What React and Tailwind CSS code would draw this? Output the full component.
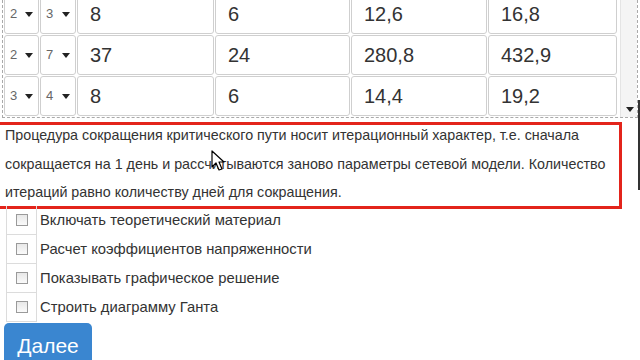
import React from "react";

const rows = [
  { a: "2", b: "3", vals: ["8", "6", "12,6", "16,8"] },
  { a: "2", b: "7", vals: ["37", "24", "280,8", "432,9"] },
  { a: "3", b: "4", vals: ["8", "6", "14,4", "19,2"] },
];

const options = [
  "Включать теоретический материал",
  "Расчет коэффициентов напряженности",
  "Показывать графическое решение",
  "Строить диаграмму Ганта",
];

const Caret = () => (
  <svg width="8" height="5" viewBox="0 0 8 5" className="shrink-0">
    <path d="M0 0 L8 0 L4 5 Z" fill="#222" />
  </svg>
);

const SelectCell = ({ value, w }) => (
  <div
    className={`flex h-full ${w} items-center justify-between rounded-[3px] border border-[#cfcfcf] bg-white pl-[5px] pr-[5px] text-[13px] text-[#666]`}
  >
    <span>{value}</span>
    <Caret />
  </div>
);

const NumCell = ({ value, w }) => (
  <div
    className={`flex h-full ${w} items-center rounded-[3px] border border-[#cfcfcf] bg-white pl-[12px] text-[20px] text-[#333]`}
  >
    {value}
  </div>
);

const Cursor = () => (
  <svg
    width="14"
    height="22"
    viewBox="0 0 14 22"
    className="pointer-events-none absolute left-[211px] top-[150px]"
  >
    <path
      d="M1 1 L1 17 L5 13 L8 20 L11 19 L8 12 L13 12 Z"
      fill="#fff"
      stroke="#000"
      strokeWidth="1.2"
      strokeLinejoin="round"
    />
  </svg>
);

export default function App() {
  return (
    <div
      className="relative h-[360px] w-[640px] overflow-hidden bg-white"
      style={{ fontFamily: '"Liberation Sans", Arial, sans-serif' }}
    >
      {/* table scroll view */}
      <div className="ml-[2px] mr-[2px] flex h-[118px] flex-col justify-end overflow-hidden border-b border-l border-r border-dashed border-[#aaa]">
        <div className="flex">
          <div className="flex flex-col gap-[1px] pb-[1px] pl-[1px]">
            {rows.map((r, i) => (
              <div key={i} className="flex h-[40px] gap-[1px]">
                <SelectCell value={r.a} w="w-[35px]" />
                <SelectCell value={r.b} w="w-[36px]" />
                <NumCell value={r.vals[0]} w="w-[137px]" />
                <NumCell value={r.vals[1]} w="w-[135px]" />
                <NumCell value={r.vals[2]} w="w-[136px]" />
                <NumCell value={r.vals[3]} w="w-[129px]" />
              </div>
            ))}
          </div>
          <div className="ml-[3px] flex w-[18px] flex-col justify-end border-l border-[#e4e4e4] bg-[#f4f4f4] pb-[5px] pl-[5px]">
            <Caret />
          </div>
        </div>
      </div>

      {/* highlighted note */}
      <div className="mt-[4px] ml-[-3px] h-[87px] w-[625px] overflow-hidden border-[3px] border-[#e3241b] pl-[5px]">
        <p className="-mt-[4px] text-[14.3px] leading-[28.5px] text-[#333]">
          Процедура сокращения критического пути носит итерационный характер,
          т.е. сначала сокращается на 1 день и рассчитываются заново параметры
          сетевой модели. Количество итераций равно количеству дней для
          сокращения.
        </p>
      </div>

      {/* options */}
      <div className="mt-[-3px] flex flex-col pl-[6px]">
        {options.map((o) => (
          <div key={o} className="flex h-[29px] items-center">
            <div className="flex h-full w-[31px] items-center justify-center border border-t-0 border-[#dcdcdc]">
              <div className="h-[12px] w-[12px] border border-[#9a9a9a] bg-gradient-to-b from-[#e8e8e8] to-[#fafafa]" />
            </div>
            <span className="ml-[3px] text-[14.8px] text-[#333]">{o}</span>
          </div>
        ))}
      </div>

      <div className="ml-[4px] mt-[1px] flex h-[48px] w-[88px] justify-center rounded-[5px] bg-[#3a86d0] pt-[11px] text-[21px] leading-[24px] text-white">
        Далее
      </div>

      {/* page scrollbar edge */}
      <div className="absolute right-0 top-[100px] h-[90px] w-[2px] bg-[#333]" />

      <Cursor />
    </div>
  );
}
